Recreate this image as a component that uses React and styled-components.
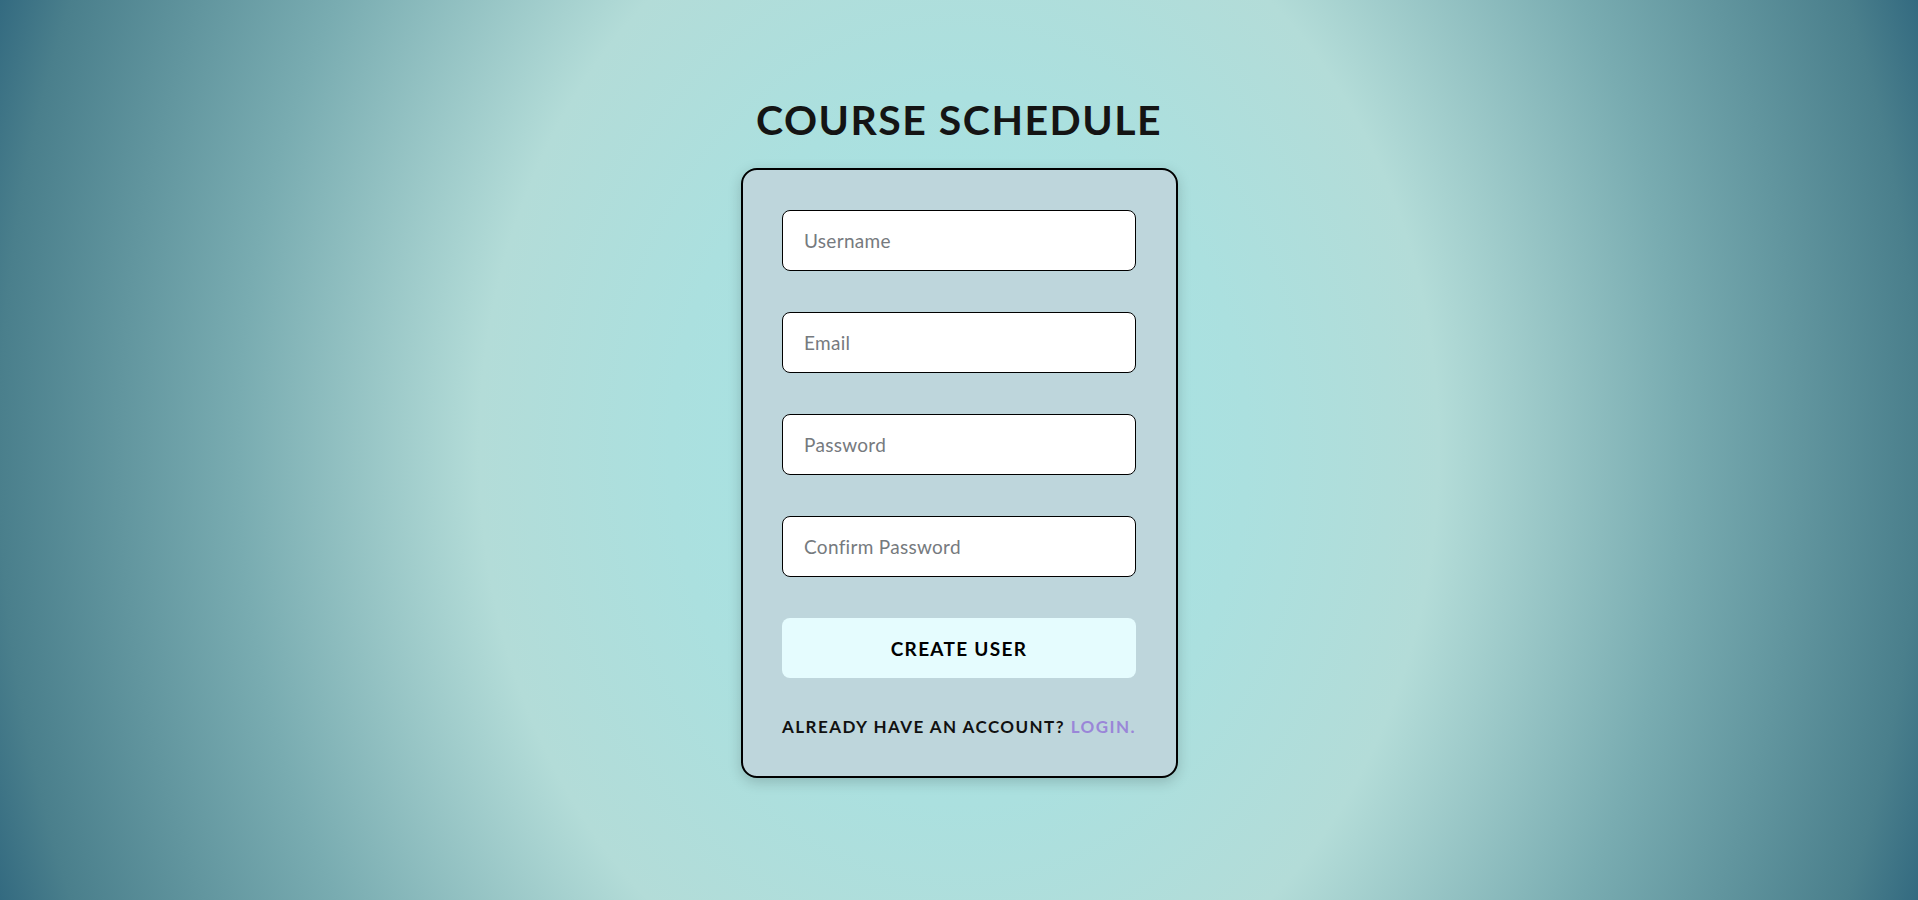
import React from 'react';
import styled, { createGlobalStyle } from 'styled-components';

const GlobalStyle = createGlobalStyle`
  * {
    box-sizing: border-box;
  }

  body {
    margin: 0;
    font-family: Lato, 'Noto Sans', sans-serif;
  }
`;

const fields = [
  { name: 'username', type: 'text', placeholder: 'Username' },
  { name: 'email', type: 'email', placeholder: 'Email' },
  { name: 'password', type: 'password', placeholder: 'Password' },
  { name: 'confirm', type: 'password', placeholder: 'Confirm Password' },
];

const App = () => {
  return (
    <>
      <GlobalStyle />
      <Page>
        <Title>Course Schedule</Title>
        <Card onSubmit={(e) => e.preventDefault()}>
          {fields.map((field) => (
            <Input
              key={field.name}
              name={field.name}
              type={field.type}
              placeholder={field.placeholder}
            />
          ))}
          <SubmitButton type='submit'>Create User</SubmitButton>
          <Footer>
            Already have an account? <LoginLink href='#'>Login.</LoginLink>
          </Footer>
        </Card>
      </Page>
    </>
  );
};

const Page = styled.main`
  min-height: 100vh;
  display: flex;
  flex-direction: column;
  align-items: center;
  padding-top: 96px;
  background: radial-gradient(
    ellipse 960px 1180px at 50% 50%,
    #a4e5e7 0%,
    #abe0df 30%,
    #b3dcd8 50%,
    #79acb1 75%,
    #4a7f8c 100%,
    #336a80 107%
  );
`;

const Title = styled.h1`
  margin: 0 0 24px;
  font-size: 41px;
  line-height: 48px;
  font-weight: 700;
  letter-spacing: 1.5px;
  text-transform: uppercase;
  color: #141414;
`;

const Card = styled.form`
  width: 437px;
  margin-left: 1px;
  padding: 40px 40px 39px 39px;
  display: flex;
  flex-direction: column;
  gap: 41px;
  background-color: #bed6dc;
  border: 2px solid #000;
  border-radius: 16px;
  box-shadow: 0 4px 14px rgba(0, 0, 0, 0.18);
`;

const Input = styled.input`
  width: 100%;
  height: 61px;
  padding: 0 21px;
  border: 1px solid #000;
  border-radius: 8px;
  background: #fff;
  font-family: inherit;
  font-size: 19px;
  letter-spacing: 0.3px;
  color: #222;
  outline: none;

  &::placeholder {
    color: #767a7e;
  }
`;

const SubmitButton = styled.button`
  height: 60px;
  border: none;
  border-radius: 8px;
  background-color: #e5fcfe;
  font-family: inherit;
  font-size: 19px;
  font-weight: 700;
  letter-spacing: 1.3px;
  text-transform: uppercase;
  color: #000;
  cursor: pointer;
`;

const Footer = styled.p`
  margin: 0;
  margin-top: -2px;
  font-size: 17px;
  line-height: 20px;
  font-weight: 700;
  letter-spacing: 1.45px;
  text-transform: uppercase;
  text-align: center;
  white-space: nowrap;
  color: #111;
`;

const LoginLink = styled.a`
  color: #9a86d8;
  text-decoration: none;
`;

export default App;
